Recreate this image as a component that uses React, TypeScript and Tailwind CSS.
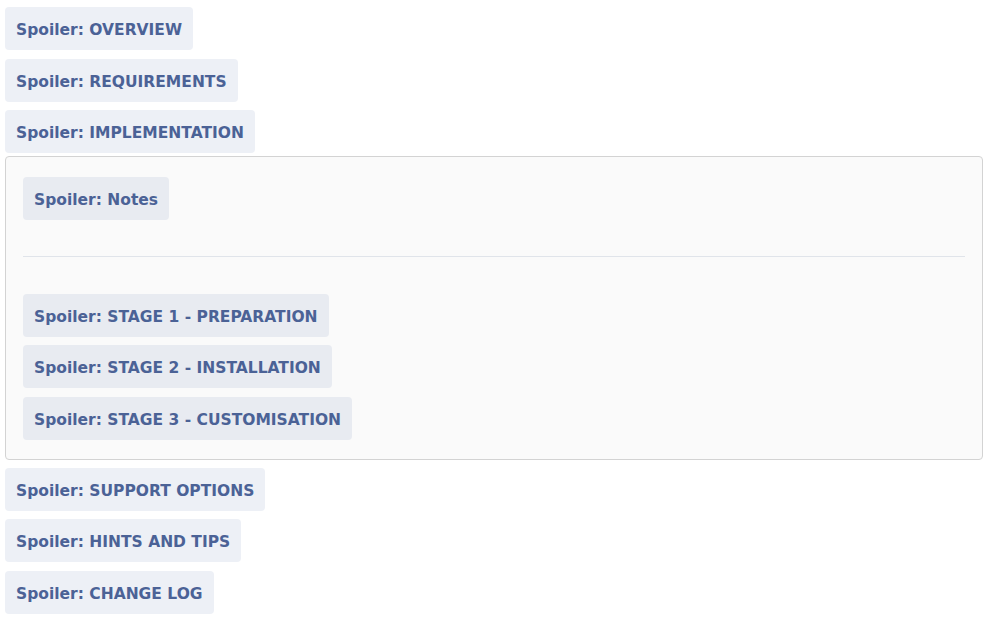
import React from 'react';

const Spoiler: React.FC<{ label: string; inner?: boolean; className?: string }> = ({ label, inner, className = '' }) => (
  <div className={`flex ${className}`}>
    <button
      className={`block h-[43px] px-[11px] pt-[14px] pb-[10px] rounded-[4px] text-[15.5px] leading-[19px] font-bold text-[#4b6296] ${
        inner ? 'bg-[#e8ebf1]' : 'bg-[#edf0f6]'
      }`}
    >
      Spoiler: {label}
    </button>
  </div>
);

export default function App() {
  return (
    <div className="bg-white min-h-screen px-[5px] pt-[7px] pr-[7px] font-['DejaVu_Sans',Verdana,sans-serif]">
      <Spoiler label="OVERVIEW" />
      <Spoiler label="REQUIREMENTS" className="mt-[9px]" />
      <Spoiler label="IMPLEMENTATION" className="mt-[8px]" />
      <div className="mt-[3px] mb-[8px] border border-[#d3d3d3] rounded-[4px] bg-[#fafafa] px-[17px] pt-[20px] pb-[19px]">
        <Spoiler label="Notes" inner />
        <div className="mt-[36px] mb-[37px] border-t border-[#e0e4ea]" />
        <Spoiler label="STAGE 1 - PREPARATION" inner />
        <Spoiler label="STAGE 2 - INSTALLATION" inner className="mt-[8px]" />
        <Spoiler label="STAGE 3 - CUSTOMISATION" inner className="mt-[9px]" />
      </div>
      <Spoiler label="SUPPORT OPTIONS" />
      <Spoiler label="HINTS AND TIPS" className="mt-[8px]" />
      <Spoiler label="CHANGE LOG" className="mt-[9px]" />
    </div>
  );
}
